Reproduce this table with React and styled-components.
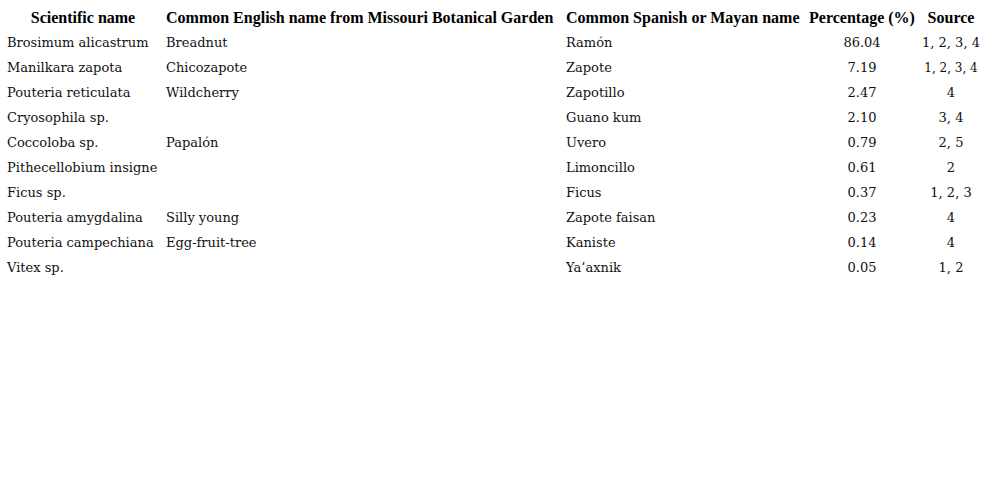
import styled, { createGlobalStyle } from "styled-components";

const GlobalStyle = createGlobalStyle`
    html, body {
        margin: 0;
        padding: 0;
        background: #ffffff;
    }
`;

const Table = styled.table`
    border-collapse: collapse;
    table-layout: fixed;
    margin-top: 5px;
    color: #000;
`;

const HeadCell = styled.th`
    height: 25px;
    padding: 0 0 0 ${(props) => (props.center ? "0" : "7px")};
    text-align: ${(props) => props.align || "center"};
    vertical-align: middle;
    white-space: nowrap;
    font-family: "Liberation Serif", serif;
    font-weight: bold;
    font-size: 16px;
`;

const Cell = styled.td`
    height: 25px;
    padding: 0 0 0 ${(props) => (props.center ? "0" : "7px")};
    text-align: ${(props) => (props.center ? "center" : "left")};
    vertical-align: middle;
    white-space: nowrap;
    font-family: "DejaVu Serif", serif;
    font-size: ${(props) => props.size || "13px"};
    color: #111;
`;

const rows = [
    ["Brosimum alicastrum", "Breadnut", "Ramón", "86.04", "1, 2, 3, 4"],
    ["Manilkara zapota", "Chicozapote", "Zapote", "7.19", "1, 2, 3, 4", "12px"],
    ["Pouteria reticulata", "Wildcherry", "Zapotillo", "2.47", "4"],
    ["Cryosophila sp.", "", "Guano kum", "2.10", "3, 4"],
    ["Coccoloba sp.", "Papalón", "Uvero", "0.79", "2, 5"],
    ["Pithecellobium insigne", "", "Limoncillo", "0.61", "2"],
    ["Ficus sp.", "", "Ficus", "0.37", "1, 2, 3"],
    ["Pouteria amygdalina", "Silly young", "Zapote faisan", "0.23", "4"],
    ["Pouteria campechiana", "Egg-fruit-tree", "Kaniste", "0.14", "4"],
    ["Vitex sp.", "", "Ya’axnik", "0.05", "1, 2"],
];

const App = () => {
    return (
        <>
            <GlobalStyle />
            <Table>
                <colgroup>
                    <col style={{ width: 159 }} />
                    <col style={{ width: 400 }} />
                    <col style={{ width: 247 }} />
                    <col style={{ width: 112 }} />
                    <col style={{ width: 66 }} />
                </colgroup>
                <thead>
                    <tr>
                        <HeadCell>Scientific name</HeadCell>
                        <HeadCell align="left">Common English name from Missouri Botanical Garden</HeadCell>
                        <HeadCell align="left">Common Spanish or Mayan name</HeadCell>
                        <HeadCell center>Percentage (%)</HeadCell>
                        <HeadCell center>Source</HeadCell>
                    </tr>
                </thead>
                <tbody>
                    {rows.map((r) => (
                        <tr key={r[0]}>
                            <Cell>{r[0]}</Cell>
                            <Cell>{r[1]}</Cell>
                            <Cell>{r[2]}</Cell>
                            <Cell center>{r[3]}</Cell>
                            <Cell center size={r[5]}>{r[4]}</Cell>
                        </tr>
                    ))}
                </tbody>
            </Table>
        </>
    );
};

export default App;
